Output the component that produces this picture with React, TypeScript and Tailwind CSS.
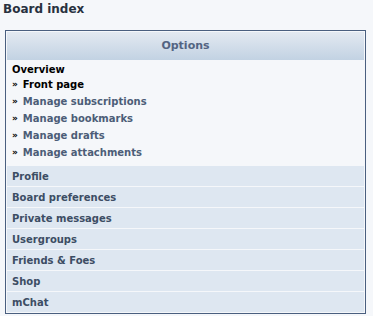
const links = [
  { label: "Front page", active: true },
  { label: "Manage subscriptions" },
  { label: "Manage bookmarks" },
  { label: "Manage drafts" },
  { label: "Manage attachments" },
];

const tabs = [
  "Profile",
  "Board preferences",
  "Private messages",
  "Usergroups",
  "Friends & Foes",
  "Shop",
  "mChat",
];

export default function App() {
  return (
    <div className="h-[316px] w-[373px] overflow-hidden bg-[#f5f7fa] font-['DejaVu_Sans',Verdana,sans-serif]">
      <h2 className="px-[3px] pt-[1px] text-[12px] font-bold leading-[16px] text-[#28313f]">
        Board index
      </h2>

      <div className="ml-[5px] mt-[13px] w-[361px] border border-[#4a5f7f] bg-[#f5f7fa] p-px">
        <div className="flex h-[28px] items-center justify-center bg-gradient-to-b from-[#e3e9f1] to-[#c2d2e3] pt-px text-[11px] font-bold text-[#536482]">
          Options
        </div>

        <div className="px-[5px] pb-[5px] pt-[3px]">
          <p className="text-[10px] font-bold leading-[13px] text-black">
            Overview
          </p>
          <ul>
            {links.map((item) => (
              <li
                key={item.label}
                className={`flex items-center gap-[5px] text-[10px] font-bold leading-[17px] ${
                  item.active ? "text-black" : "text-[#4c5d77]"
                }`}
              >
                <span className="text-[9px] text-black">»</span>
                {item.label}
              </li>
            ))}
          </ul>
        </div>

        <div className="flex flex-col gap-px">
          {tabs.map((tab) => (
            <div
              key={tab}
              className="flex h-[20px] items-center bg-[#dee7f1] px-[5px] text-[10px] font-bold text-[#3c4d64]"
            >
              {tab}
            </div>
          ))}
        </div>
      </div>
    </div>
  );
}
